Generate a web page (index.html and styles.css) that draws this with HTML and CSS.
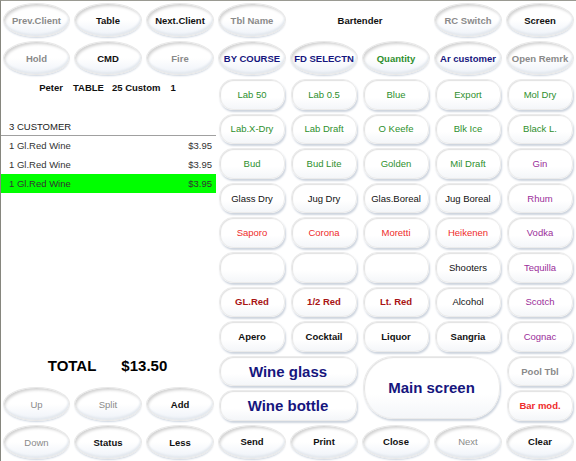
FILE: index.html
```html
<!DOCTYPE html>
<html>
<head>
<meta charset="utf-8">
<link rel="stylesheet" href="styles.css">
</head>
<body>
<div class="app">
  <aside class="left">
    <div class="ovalrow">
      <div class="btn oval gray b">Prev.Client</div>
      <div class="btn oval b">Table</div>
      <div class="btn oval b">Next.Client</div>
    </div>
    <div class="ovalrow">
      <div class="btn oval gray b">Hold</div>
      <div class="btn oval b">CMD</div>
      <div class="btn oval gray b">Fire</div>
    </div>
    <div class="info"><span>Peter</span><span>TABLE</span><span>25 Custom</span><span>1</span></div>
    <div class="cust">3 CUSTOMER</div>
    <ul class="items">
      <li><span>1 Gl.Red Wine</span><span>$3.95</span></li>
      <li><span>1 Gl.Red Wine</span><span>$3.95</span></li>
      <li class="sel"><span>1 Gl.Red Wine</span><span>$3.95</span></li>
    </ul>
    <div class="spacer"></div>
    <div class="total"><span>TOTAL</span><span>$13.50</span></div>
    <div class="ovalrow">
      <div class="btn oval gray">Up</div>
      <div class="btn oval gray">Split</div>
      <div class="btn oval b">Add</div>
    </div>
    <div class="ovalrow">
      <div class="btn oval gray">Down</div>
      <div class="btn oval b">Status</div>
      <div class="btn oval b">Less</div>
    </div>
  </aside>
  <main class="grid">
    <div class="btn oval gray b">Tbl Name</div>
    <div class="btn plain b span2">Bartender</div>
    <div class="btn oval gray b">RC Switch</div>
    <div class="btn oval b">Screen</div>
    <div class="btn oval navy b">BY COURSE</div>
    <div class="btn oval navy b">FD SELECTN</div>
    <div class="btn oval green b">Quantity</div>
    <div class="btn oval navy b">Ar customer</div>
    <div class="btn oval gray b">Open Remrk</div>

    <div class="btn pill green">Lab 50</div>
    <div class="btn pill green">Lab 0.5</div>
    <div class="btn pill green">Blue</div>
    <div class="btn pill green">Export</div>
    <div class="btn pill green">Mol Dry</div>

    <div class="btn pill green">Lab.X-Dry</div>
    <div class="btn pill green">Lab Draft</div>
    <div class="btn pill green">O Keefe</div>
    <div class="btn pill green">Blk Ice</div>
    <div class="btn pill green">Black L.</div>

    <div class="btn pill green">Bud</div>
    <div class="btn pill green">Bud Lite</div>
    <div class="btn pill green">Golden</div>
    <div class="btn pill green">Mil Draft</div>
    <div class="btn pill purple">Gin</div>

    <div class="btn pill">Glass Dry</div>
    <div class="btn pill">Jug Dry</div>
    <div class="btn pill">Glas.Boreal</div>
    <div class="btn pill">Jug Boreal</div>
    <div class="btn pill purple">Rhum</div>

    <div class="btn pill red">Saporo</div>
    <div class="btn pill red">Corona</div>
    <div class="btn pill red">Moretti</div>
    <div class="btn pill red">Heikenen</div>
    <div class="btn pill purple">Vodka</div>

    <div class="btn pill"></div>
    <div class="btn pill"></div>
    <div class="btn pill"></div>
    <div class="btn pill">Shooters</div>
    <div class="btn pill purple">Tequilla</div>

    <div class="btn pill dred b">GL.Red</div>
    <div class="btn pill dred b">1/2 Red</div>
    <div class="btn pill dred b">Lt. Red</div>
    <div class="btn pill">Alcohol</div>
    <div class="btn pill purple">Scotch</div>

    <div class="btn pill b">Apero</div>
    <div class="btn pill b">Cocktail</div>
    <div class="btn pill b">Liquor</div>
    <div class="btn pill b">Sangria</div>
    <div class="btn pill purple">Cognac</div>

    <div class="btn pill big navy b span2">Wine glass</div>
    <div class="btn pill big navy b main">Main screen</div>
    <div class="btn pill gray b">Pool Tbl</div>
    <div class="btn pill big navy b span2">Wine bottle</div>
    <div class="btn pill red b">Bar mod.</div>

    <div class="btn oval b">Send</div>
    <div class="btn oval b">Print</div>
    <div class="btn oval b">Close</div>
    <div class="btn oval gray">Next</div>
    <div class="btn oval b">Clear</div>
  </main>
</div>
</body>
</html>
```

FILE: styles.css
```css
html, body {
  margin: 0;
  padding: 0;
  background: #fff;
}

.app {
  display: flex;
  width: 576px;
  height: 461px;
  box-sizing: border-box;
  border-top: 1px solid #9a9a92;
  border-left: 1px solid #86867e;
  font-family: "Liberation Sans", Arial, sans-serif;
  font-size: 9.5px;
  color: #111;
  overflow: hidden;
}

.left {
  width: 215px;
  display: flex;
  flex-direction: column;
}

.ovalrow {
  display: grid;
  grid-template-columns: 71px 72px 72px;
  height: 38px;
  flex: none;
}

.grid {
  width: 360px;
  display: grid;
  grid-template-columns: repeat(5, 72px);
  grid-template-rows: 38px 38px repeat(10, 34.6px) 38px;
}

.btn {
  display: flex;
  align-items: center;
  justify-content: center;
  box-sizing: border-box;
  white-space: nowrap;
}

.b { font-weight: bold; }
.gray { color: #8a8a8a; }
.green { color: #2e8f2e; }
.navy { color: #16167e; }
.red { color: #ee2b2b; }
.dred { color: #a81414; }
.purple { color: #9a2e9a; }

.oval {
  margin: 2px;
  border-radius: 50%;
  border: 1px solid #e8e8e8;
  background: linear-gradient(180deg, #ffffff 50%, #eef2f8 100%);
  box-shadow: inset 2px 3px 3px -1px #d2d2d2, inset -1px -2px 2px #e3e8ee, 0 2px 2px -1px #cdd5e0;
}

.pill {
  margin: 2px 3px;
  border-radius: 14px;
  border: 1px solid #ebebeb;
  background: linear-gradient(180deg, #ffffff 60%, #f4f6f9 100%);
  box-shadow: inset 1px 1px 1px #e2e2e2, 1px 2px 2px #cdd4de;
}

.plain {
  background: transparent;
}

.big {
  font-size: 15px;
}

.span2 {
  grid-column: span 2;
}

.main {
  grid-column: span 2;
  grid-row: span 2;
  border-radius: 30px;
  margin: 2px 4px 4px 3px;
}

.info {
  height: 20px;
  flex: none;
  display: flex;
  justify-content: center;
  align-items: center;
  gap: 10px;
  font-weight: bold;
  padding-right: 2px;
}

.info span:nth-child(3) {
  margin-left: -2px;
}

.cust {
  margin-top: 20px;
  height: 18px;
  flex: none;
  display: flex;
  align-items: center;
  padding-left: 8px;
  border-bottom: 1px solid #a0a0a0;
  color: #222;
}

.items {
  list-style: none;
  margin: 0;
  padding: 0;
  flex: none;
}

.items li {
  height: 19px;
  display: flex;
  justify-content: space-between;
  align-items: center;
  padding: 0 4px 0 8px;
  color: #333;
}

.items li.sel {
  background: #00ff00;
}

.spacer {
  flex: 1;
}

.total {
  height: 20px;
  flex: none;
  display: flex;
  justify-content: center;
  align-items: center;
  gap: 25px;
  font-size: 15px;
  font-weight: bold;
  color: #000;
  margin-bottom: 10px;
  padding-right: 2px;
}
```
